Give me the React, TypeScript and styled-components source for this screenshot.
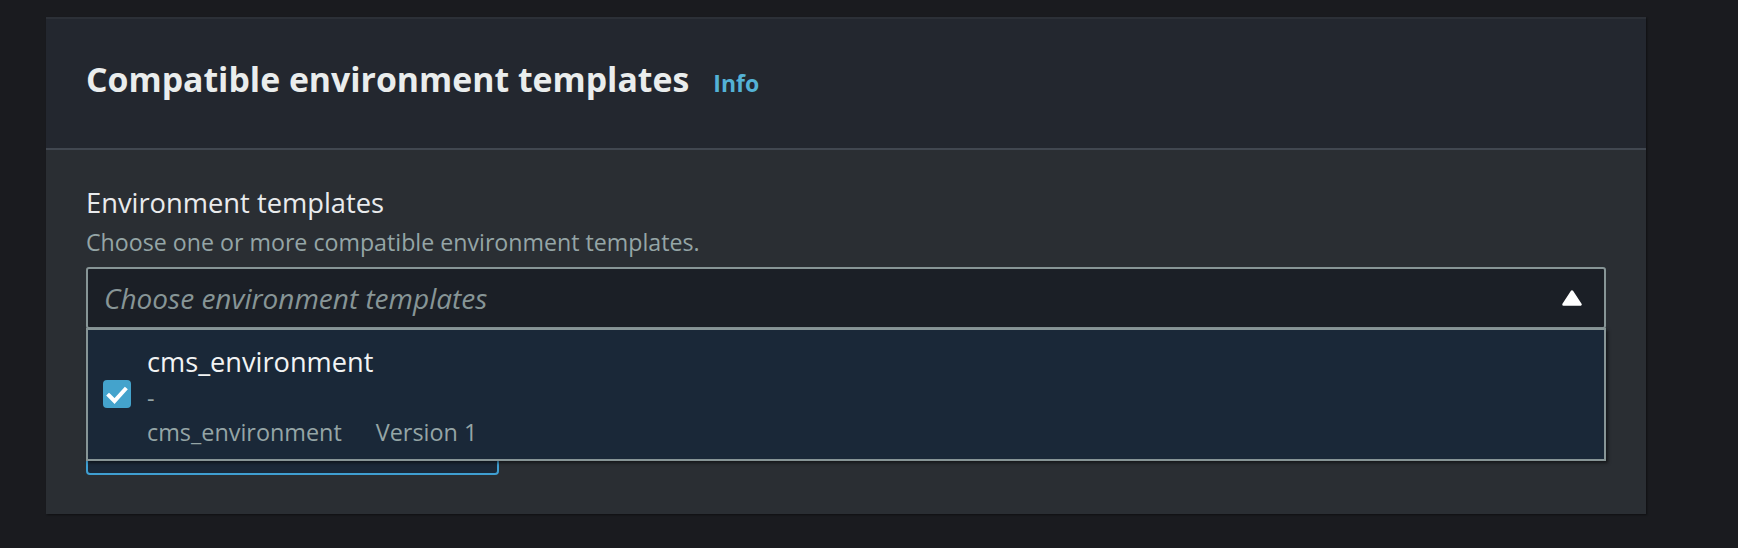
import React from 'react';
import styled, { createGlobalStyle } from 'styled-components';

const GlobalStyle = createGlobalStyle`
  html, body {
    margin: 0;
    padding: 0;
    background: #1a1b1f;
  }
  body {
    font-family: 'Open Sans', 'Liberation Sans', sans-serif;
    -webkit-font-smoothing: antialiased;
  }
`;

const Page = styled.div`
  padding: 17px 0 0 46px;
  min-height: 548px;
  box-sizing: border-box;
`;

const Panel = styled.section`
  width: 1600px;
  background: #2a2e33;
  border-top: 2px solid #2c3037;
  box-shadow: 1px 1px 2px rgba(0, 0, 0, 0.45);
`;

const Header = styled.header`
  display: flex;
  align-items: baseline;
  gap: 24px;
  padding: 38px 40px 47px 40px;
  background: #23272f;
  border-bottom: 2px solid #414750;
`;

const Title = styled.h2`
  margin: 0;
  font-size: 33.8px;
  line-height: 44px;
  font-weight: 700;
  color: #eaeded;
`;

const InfoLink = styled.a`
  font-size: 23px;
  font-weight: 700;
  color: #54b2d6;
  text-decoration: none;
`;

const Body = styled.div`
  padding: 35px 40px 39px 40px;
`;

const Label = styled.div`
  font-size: 27.3px;
  line-height: 36px;
  font-weight: 500;
  color: #e9ebed;
`;

const Description = styled.div`
  margin-top: 6px;
  font-size: 23.2px;
  line-height: 30px;
  color: #95a5a6;
`;

const SelectWrap = styled.div`
  position: relative;
  margin-top: 10px;
`;

const Trigger = styled.div`
  display: flex;
  align-items: center;
  justify-content: space-between;
  height: 62px;
  box-sizing: border-box;
  padding: 0 22px 0 16px;
  background: #1b1f26;
  border: 2px solid #879596;
  border-radius: 3px;
`;

const Placeholder = styled.span`
  font-size: 28px;
  line-height: 36px;
  font-style: italic;
  color: #879596;
`;

const Caret = styled.svg`
  display: block;
  width: 20px;
  height: 16px;
`;

const Dropdown = styled.ul`
  position: absolute;
  left: 0;
  right: 0;
  top: calc(100% - 1px);
  z-index: 10;
  margin: 0;
  padding: 0;
  list-style: none;
  background: #1a2838;
  border: 2px solid #879596;
  box-shadow: 2px 2px 3px rgba(0, 0, 0, 0.5);
`;

const Option = styled.li`
  display: flex;
  align-items: center;
  gap: 16px;
  padding: 14px 15px 10px 15px;
`;

const Checkbox = styled.span<{ checked?: boolean }>`
  flex-shrink: 0;
  width: 28px;
  height: 28px;
  border-radius: 4px;
  background: ${p => (p.checked ? '#44a3cc' : 'transparent')};
  display: flex;
  align-items: center;
  justify-content: center;
  margin-top: -6px;
`;

const OptionText = styled.div`
  display: flex;
  flex-direction: column;
`;

const OptionLabel = styled.div`
  font-size: 27.2px;
  line-height: 36px;
  color: #f2f3f3;
`;

const OptionMeta = styled.div<{ $shift?: number; $height?: number }>`
  display: flex;
  gap: 34px;
  padding-top: ${p => p.$shift ?? 0}px;
  font-size: 23.4px;
  line-height: ${p => p.$height ?? 34.5}px;
  color: #95a5a6;
`;

const Token = styled.div`
  width: 413px;
  height: 134px;
  margin-top: 12px;
  box-sizing: border-box;
  background: #1a2838;
  border: 2px solid #3f9fd2;
  border-radius: 4px;
`;

export default function App() {
  return (
    <>
      <GlobalStyle />
      <Page>
        <Panel>
          <Header>
            <Title>Compatible environment templates</Title>
            <InfoLink href="#">Info</InfoLink>
          </Header>
          <Body>
            <Label>Environment templates</Label>
            <Description>Choose one or more compatible environment templates.</Description>
            <SelectWrap>
              <Trigger>
                <Placeholder>Choose environment templates</Placeholder>
                <Caret viewBox="0 0 20 16">
                  <path d="M10 1.5 L18.5 14.5 L1.5 14.5 Z" fill="#ffffff" stroke="#ffffff" strokeWidth="2.5" strokeLinejoin="round" />
                </Caret>
              </Trigger>
              <Dropdown>
                <Option>
                  <Checkbox checked>
                    <svg width="28" height="28" viewBox="0 0 28 28">
                      <path d="M6 15.5 L11.5 21 L22 9.5" fill="none" stroke="#ffffff" strokeWidth="4" strokeLinecap="square" />
                    </svg>
                  </Checkbox>
                  <OptionText>
                    <OptionLabel>cms_environment</OptionLabel>
                    <OptionMeta $shift={3} $height={31.5}>-</OptionMeta>
                    <OptionMeta>
                      <span>cms_environment</span>
                      <span>Version 1</span>
                    </OptionMeta>
                  </OptionText>
                </Option>
              </Dropdown>
            </SelectWrap>
            <Token />
          </Body>
        </Panel>
      </Page>
    </>
  );
}
